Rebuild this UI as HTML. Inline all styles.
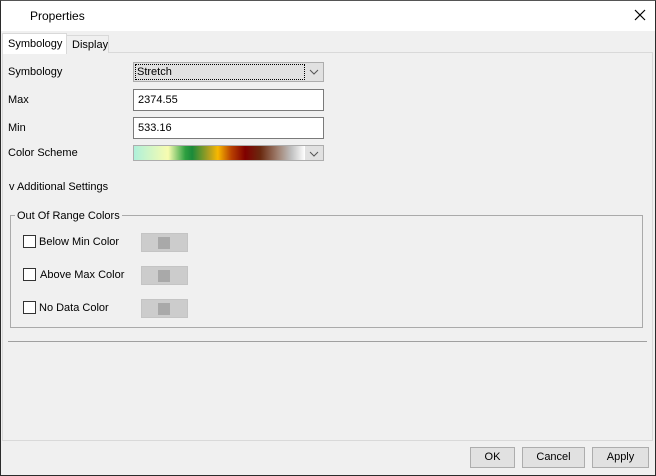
<!DOCTYPE html>
<html><head><style>
*{margin:0;padding:0;box-sizing:border-box}
body{width:656px;height:476px;background:#f0f0f0;font-family:"Liberation Sans",sans-serif;font-size:11px;color:#000;position:relative;overflow:hidden}
.a{position:absolute;white-space:nowrap}
.win{left:0;top:0;width:656px;height:476px;border:1px solid #2b2b2b;border-top-color:#555}
.title{left:1px;top:1px;width:654px;height:30px;background:#fff}
.inp{background:#fff;border:1px solid #7a7a7a;height:22px;padding:4px 0 0 4px}
.btn{border:1px solid #adadad;background:#e1e1e1;height:21px;text-align:center;line-height:19px}
.cb{width:13px;height:13px;border:1px solid #333;background:#fff}
.sw{width:47px;height:19px;background:#cccccc;border:1px solid #c4c4c4}
.sw i{position:absolute;left:16px;top:3px;width:12px;height:12px;background:#a9a9a9}
</style></head><body>
<div class="a win"></div>
<div class="a title"></div>
<div class="a" style="left:30px;top:9px;font-size:12px">Properties</div>
<svg class="a" style="left:634px;top:9px" width="12" height="12"><path d="M1 1L11 11M11 1L1 11" stroke="#000" stroke-width="1.2"/></svg>
<div class="a" style="left:2px;top:52px;width:651px;height:389px;border:1px solid #d9d9d9;background:#f0f0f0"></div>
<div class="a" style="left:66px;top:35px;width:43px;height:18px;background:#f0f0f0;border:1px solid #d9d9d9;border-bottom:none;padding:3px 0 0 5px">Display</div>
<div class="a" style="left:2px;top:33px;width:65px;height:21px;background:#fff;border:1px solid #d9d9d9;border-bottom:none;padding:4px 0 0 5px">Symbology</div>
<div class="a" style="left:8px;top:66px">Symbology</div>
<div class="a" style="left:133px;top:62px;width:191px;height:20px;background:#e1e1e1;border:1px solid #adadad"></div>
<div class="a" style="left:135px;top:64px;width:170px;height:16px;border:1px dotted #000;padding:0 0 0 1px;line-height:14px">Stretch</div>
<svg class="a" style="left:309px;top:69px" width="10" height="6"><path d="M1 1L5 5L9 1" stroke="#555" fill="none"/></svg>
<div class="a" style="left:8px;top:94px">Max</div>
<div class="a inp" style="left:133px;top:89px;width:191px">2374.55</div>
<div class="a" style="left:8px;top:122px">Min</div>
<div class="a inp" style="left:133px;top:117px;width:191px">533.16</div>
<div class="a" style="left:8px;top:147px">Color Scheme</div>
<div class="a" style="left:133px;top:145px;width:191px;height:16px;border:1px solid #adadad;background:#e1e1e1"></div>
<div class="a" style="left:134px;top:146px;width:171px;height:14px;background:linear-gradient(90deg,#aff0da 0%,#f8fcb0 20%,#2ea040 30%,#1a8a3a 34%,#b0a020 44%,#f8b800 49%,#b84000 57%,#800000 65%,#6a2a10 74%,#a08070 84%,#c0c0c0 92%,#ffffff 100%)"></div>
<svg class="a" style="left:309px;top:151px" width="10" height="6"><path d="M1 1L5 5L9 1" stroke="#555" fill="none"/></svg>
<div class="a" style="left:9px;top:181px">v Additional Settings</div>
<div class="a" style="left:10px;top:215px;width:633px;height:113px;border:1px solid #aaa"></div>
<div class="a" style="left:15px;top:210px;background:#f0f0f0;padding:0 2px">Out Of Range Colors</div>
<div class="a cb" style="left:23px;top:235px"></div><div class="a" style="left:39px;top:236px">Below Min Color</div>
<div class="a sw" style="left:141px;top:233px"><i></i></div>
<div class="a cb" style="left:23px;top:268px"></div><div class="a" style="left:40px;top:269px">Above Max Color</div>
<div class="a sw" style="left:141px;top:266px"><i></i></div>
<div class="a cb" style="left:23px;top:301px"></div><div class="a" style="left:39px;top:302px">No Data Color</div>
<div class="a sw" style="left:141px;top:299px"><i></i></div>
<div class="a" style="left:8px;top:341px;width:639px;height:1px;background:#a0a0a0"></div>
<div class="a btn" style="left:470px;top:447px;width:45px">OK</div>
<div class="a btn" style="left:522px;top:447px;width:63px">Cancel</div>
<div class="a btn" style="left:592px;top:447px;width:57px">Apply</div>
</body></html>
